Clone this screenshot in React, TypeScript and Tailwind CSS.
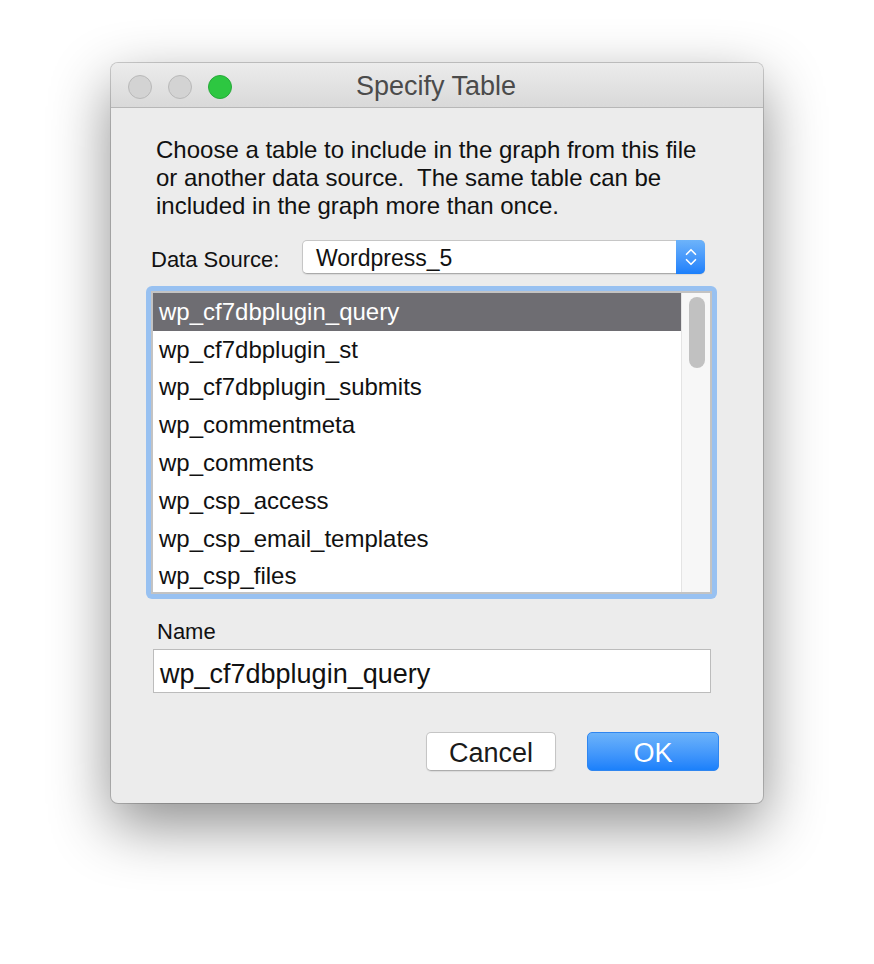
import { ChevronDown, ChevronUp } from "lucide-react";

const tables = [
  "wp_cf7dbplugin_query",
  "wp_cf7dbplugin_st",
  "wp_cf7dbplugin_submits",
  "wp_commentmeta",
  "wp_comments",
  "wp_csp_access",
  "wp_csp_email_templates",
  "wp_csp_files",
];

const font = { fontFamily: '"Liberation Sans", Arial, sans-serif' };

function TrafficLights() {
  return (
    <div className="absolute left-[17px] top-[12px] flex gap-[16px]">
      <span className="w-[24px] h-[24px] rounded-full bg-[#d3d3d3] border border-[#b9b9b9]" />
      <span className="w-[24px] h-[24px] rounded-full bg-[#d3d3d3] border border-[#b9b9b9]" />
      <span className="w-[24px] h-[24px] rounded-full bg-[#2dc741] border border-[#27a93a]" />
    </div>
  );
}

export default function App() {
  return (
    <div className="min-h-[964px] bg-white pt-[63px] pl-[111px]" style={font}>
      <div className="w-[652px] rounded-[7px] bg-[#ececec] shadow-[0_22px_60px_rgba(0,0,0,0.45),0_0_0_1px_rgba(0,0,0,0.18)] overflow-hidden">
        {/* Title bar */}
        <div className="relative h-[45px] flex items-center justify-center border-b border-[#b7b7b7] bg-gradient-to-b from-[#ececec] to-[#d9d9d9]">
          <TrafficLights />
          <span className="text-[27px] leading-none text-[#4b4b4b] pt-[3px] pr-[2px]">Specify Table</span>
        </div>

        <div className="pt-[28px] pb-[32px]">
          <p className="pl-[45px] text-[24px] leading-[28px] text-[#111]">
            Choose a table to include in the graph from this file
            <br />
            or another data source.&nbsp; The same table can be
            <br />
            included in the graph more than once.
          </p>

          {/* Data source */}
          <div className="mt-[20px] flex items-center pl-[40px]">
            <span className="text-[22px] leading-none text-[#111] w-[151px] pt-[6px]">Data Source:</span>
            <div className="flex h-[34px] w-[403px] rounded-[5px] bg-white border border-[#c6c6c6] border-b-[#aaaaaa] shadow-[0_1px_1px_rgba(0,0,0,0.08)]">
              <span className="flex-1 flex items-center pl-[13px] pt-[2px] text-[23px] leading-none text-[#111]">Wordpress_5</span>
              <span className="w-[29px] -my-px -mr-px rounded-r-[5px] bg-gradient-to-b from-[#6db3fa] to-[#1b7ffb] flex flex-col items-center justify-center text-white">
                <ChevronUp className="w-[18px] h-[18px] -mb-[4px]" strokeWidth={2.2} />
                <ChevronDown className="w-[18px] h-[18px] -mt-[4px]" strokeWidth={2.2} />
              </span>
            </div>
          </div>

          {/* Table list */}
          <div className="mt-[12px] ml-[35px] w-[571px] h-[313px] rounded-[6px] bg-[#98c1f1] p-[5px]">
            <div className="h-full border-2 border-[#c3c3c3] bg-white flex overflow-hidden">
              <div className="flex-1">
                {tables.map((t, i) => (
                  <div
                    key={t}
                    className={`h-[37.8px] flex items-center pl-[6px] text-[24px] leading-none ${
                      i === 0 ? "bg-[#6e6d72] text-white" : "text-[#111]"
                    }`}
                  >
                    {t}
                  </div>
                ))}
              </div>
              <div className="w-[29px] bg-[#f7f7f7] border-l border-[#e4e4e4] pl-[7px] pt-[4px]">
                <div className="w-[16px] h-[71px] rounded-full bg-[#c1c1c1]" />
              </div>
            </div>
          </div>

          {/* Name */}
          <div className="mt-[21px] pl-[46px] text-[22px] leading-[24px] text-[#111]">Name</div>
          <div className="mt-[5px] ml-[42px] w-[558px] h-[44px] bg-white border border-[#bcbcbc] flex items-center pl-[6px] pt-[6px] text-[27px] leading-none text-[#111]">
            wp_cf7dbplugin_query
          </div>

          {/* Buttons */}
          <div className="mt-[39px] flex justify-end gap-[31px] pr-[44px]">
            <button className="w-[130px] h-[39px] pt-[3px] rounded-[5px] bg-white border border-[#c5c5c5] border-b-[#adadad] text-[27px] leading-none text-[#1a1a1a] shadow-[0_1px_1px_rgba(0,0,0,0.08)]">
              Cancel
            </button>
            <button className="w-[132px] h-[39px] pt-[3px] rounded-[5px] bg-gradient-to-b from-[#6cb3fa] to-[#1a80fb] border border-[#2f86f0] text-[27px] leading-none text-white">
              OK
            </button>
          </div>
        </div>
      </div>
    </div>
  );
}
